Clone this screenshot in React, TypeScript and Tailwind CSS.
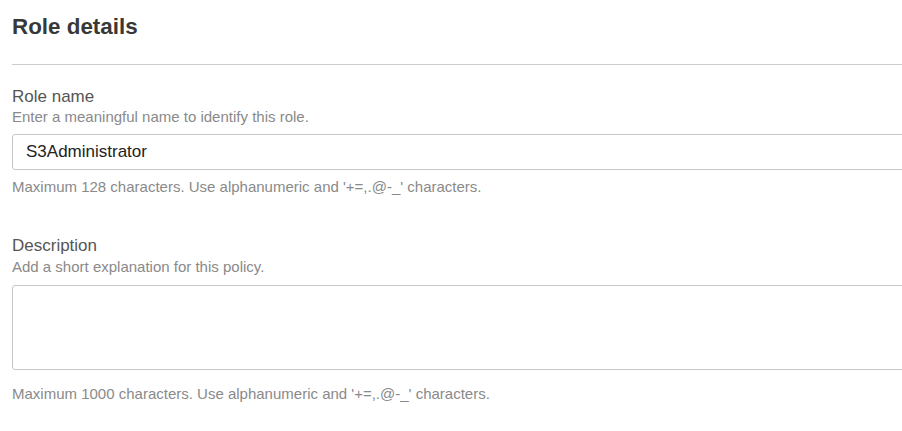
import React from "react";

export default function App() {
  const font = { fontFamily: '"Liberation Sans", Arial, sans-serif' };
  return (
    <div className="w-full h-[431px] overflow-hidden bg-white" style={font}>
      <div className="-mr-6 pl-3 pt-[13px]">
        <h2 className="text-[22.4px] leading-[28px] font-bold text-[#383838]">Role details</h2>
        <div className="mt-[23px] h-px bg-[#cccccc]" />

        <div className="mt-[22px]">
          <div className="text-[17px] leading-[20px] text-[#555]">Role name</div>
          <div className="mt-[1px] text-[15px] leading-[18px] text-[#8a8a8a]">
            Enter a meaningful name to identify this role.
          </div>
          <div className="mt-[8px] h-[36px] border border-[#c6c6c6] rounded-[3px] flex items-center pl-[13px] text-[17px] text-[#222]">
            S3Administrator
          </div>
          <div className="mt-[9px] text-[15px] leading-[16px] text-[#8a8a8a]">
            Maximum 128 characters. Use alphanumeric and '+=,.@-_' characters.
          </div>
        </div>

        <div className="mt-[41px]">
          <div className="text-[17px] leading-[20px] text-[#555]">Description</div>
          <div className="mt-[2px] text-[15px] leading-[18px] text-[#8a8a8a]">
            Add a short explanation for this policy.
          </div>
          <div className="mt-[9px] h-[85px] border border-[#c6c6c6] rounded-[3px]" />
          <div className="mt-[16px] text-[15px] leading-[16px] text-[#8a8a8a]">
            Maximum 1000 characters. Use alphanumeric and '+=,.@-_' characters.
          </div>
        </div>
      </div>
    </div>
  );
}
